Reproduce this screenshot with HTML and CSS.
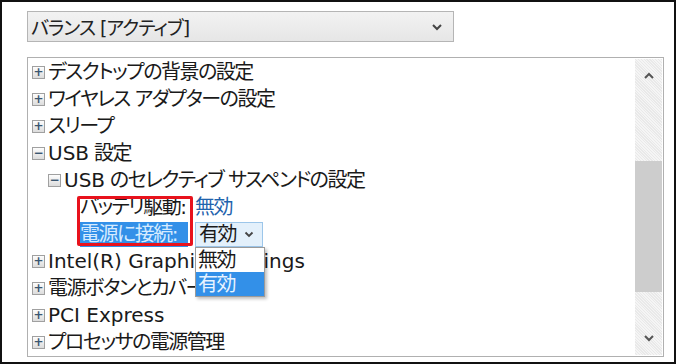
FILE: index.html
```html
<!DOCTYPE html>
<html lang="ja">
<head>
    <meta charset="UTF-8">
    <title>電源オプション - 詳細設定</title>
    <link rel="stylesheet" href="styles.css">
</head>
<body>

<div class="frame">
    <div class="plan-select">
        <span>バランス [アクティブ]</span>
        <svg class="chev" width="12" height="8" viewBox="0 0 12 8"><polyline points="2,2 6,6 10,2" fill="none" stroke="#444" stroke-width="2"/></svg>
    </div>

    <div class="listbox">
        <div class="rows">
            <div class="row l1"><span class="tog">+</span><span>デスクトップの背景の設定</span></div>
            <div class="row l1"><span class="tog">+</span><span>ワイヤレス アダプターの設定</span></div>
            <div class="row l1"><span class="tog">+</span><span>スリープ</span></div>
            <div class="row l1"><span class="tog">−</span><span><span class="en">USB</span> 設定</span></div>
            <div class="row l2"><span class="tog">−</span><span><span class="en">USB</span> のセレクティブ サスペンドの設定</span></div>
            <div class="params">
                <div class="row l3">
                    <span class="label">バッテリ駆動:</span>
                    <span class="value">無効</span>
                </div>
                <div class="row l3">
                    <span class="label selected">電源に接続:</span>
                    <span class="combo">有効
                        <svg width="10" height="7" viewBox="0 0 10 7"><polyline points="1.5,1.5 5,5 8.5,1.5" fill="none" stroke="#444" stroke-width="1.8"/></svg>
                    </span>
                </div>
                <div class="mark"></div>
                <ul class="menu">
                    <li>無効</li>
                    <li class="hot">有効</li>
                </ul>
            </div>
            <div class="row l1"><span class="tog">+</span><span class="en">Intel(R) Graphics Settings</span></div>
            <div class="row l1"><span class="tog">+</span><span>電源ボタンとカバー</span></div>
            <div class="row l1"><span class="tog">+</span><span class="en">PCI Express</span></div>
            <div class="row l1"><span class="tog">+</span><span>プロセッサの電源管理</span></div>
        </div>
        <div class="scrollbar">
            <div class="arrow">
                <svg width="12" height="8" viewBox="0 0 12 8"><polyline points="2,6 6,2 10,6" fill="none" stroke="#555" stroke-width="2"/></svg>
            </div>
            <div class="track"><div class="thumb"></div></div>
            <div class="arrow">
                <svg width="12" height="8" viewBox="0 0 12 8"><polyline points="2,2 6,6 10,2" fill="none" stroke="#555" stroke-width="2"/></svg>
            </div>
        </div>
    </div>
</div>

</body>
</html>
```

FILE: styles.css
```css
body { margin: 0; background: #fff; font-family: "DejaVu Sans", "Noto Sans CJK JP", sans-serif; font-feature-settings: "palt"; color: #1a1a1a; }
.frame { width: 676px; height: 364px; box-sizing: border-box; border: 2px solid #111; padding: 9px 0 0 25px; }

.plan-select { width: 427px; height: 31px; box-sizing: border-box; border: 1px solid #b5b5b5; background: linear-gradient(#f2f2f2, #e6e6e6); display: flex; align-items: center; justify-content: space-between; padding: 0 10px 0 3px; font-size: 19px; letter-spacing: -1px; color: #222; }
.plan-select .chev { margin-top: 1px; }

.listbox { margin-top: 15px; width: 637px; height: 300px; box-sizing: border-box; border: 1px solid #b0b0b0; display: flex; background: #fff; }
.rows { flex: 1; padding-top: 1px; overflow: hidden; }
.row { height: 27px; display: flex; align-items: center; font-size: 20px; letter-spacing: -1.5px; line-height: 27px; white-space: nowrap; }
.en { letter-spacing: 0; }
.l1 { padding-left: 4px; }
.l2 { padding-left: 20px; }
.l3 { padding-left: 52px; }

.tog { width: 11px; height: 11px; border: 1px solid #a0a0a0; background: linear-gradient(#fdfdfd, #dcdcdc); margin-right: 3px; display: flex; align-items: center; justify-content: center; font-family: "DejaVu Sans", sans-serif; font-size: 12px; font-weight: bold; line-height: 11px; letter-spacing: 0; color: #3b5670; flex: none; }

.params { position: relative; }
.label { width: 108px; height: 25px; line-height: 25px; margin-right: 7px; }
.label.selected { background: #3390e8; color: #d6ebff; }
.value { color: #1f63ad; }
.combo { width: 68px; height: 25px; box-sizing: border-box; border: 1px solid #9cc6ea; background: #e3f0fb; display: flex; align-items: center; justify-content: space-between; padding: 0 8px 0 3px; line-height: 23px; }

.mark { position: absolute; left: 49px; top: 2px; width: 116px; height: 50px; box-sizing: border-box; border: 3px solid #e8121c; border-radius: 2px; }

.menu { position: absolute; left: 167px; top: 53px; width: 68px; margin: 0; padding: 0; list-style: none; border: 1px solid #9a9a9a; background: #fff; box-shadow: 2px 2px 3px rgba(0,0,0,0.25); font-size: 20px; letter-spacing: -1.5px; }
.menu li { height: 24px; line-height: 24px; padding-left: 2px; }
.menu li.hot { background: #3390e8; color: #e8f3ff; }

.scrollbar { width: 27px; margin: 1px 1px 1px 0; display: flex; flex-direction: column; background: #efefef; background-image: repeating-linear-gradient(45deg, #f5f5f5 0 1px, #e9e9e9 1px 2px); }
.arrow { height: 34px; display: flex; align-items: center; justify-content: center; }
.track { flex: 1; padding-top: 68px; }
.thumb { height: 131px; background: #cdcdcd; }
```
